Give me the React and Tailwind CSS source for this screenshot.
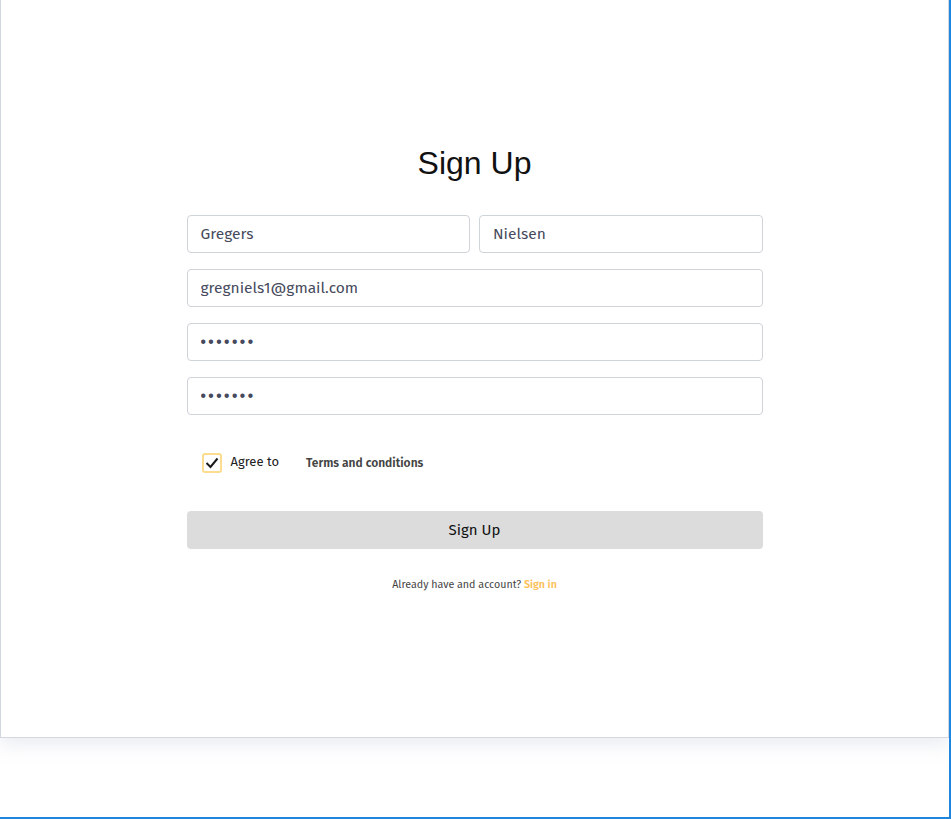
const font = { fontFamily: '"Fira Sans", "Noto Sans", "Open Sans", sans-serif' };

function Field({ value, className = "" }) {
    return (
        <input
            readOnly
            value={value}
            className={`h-[38px] w-full rounded border border-[#cfd3da] bg-white px-[13px] text-[15.5px] text-[#464a5c] outline-none ${className}`}
            style={font}
        />
    );
}

export default function App() {
    return (
        <div className="w-[951px] h-[819px] bg-white border-r-2 border-b-2 border-[#1f86e0] overflow-hidden">
            <div className="w-[949px] h-[738px] bg-white border-l border-r border-b border-[#d3d8e0] shadow-[0_8px_16px_rgba(200,205,220,0.35)] flex flex-col items-center pt-[145px]">
                <h1 className="text-[32px] leading-[37px] text-[#111] font-['Liberation_Sans',Arial,sans-serif]">
                    Sign Up
                </h1>

                <div className="w-[576px] mt-[33px] flex flex-col gap-4">
                    <div className="flex gap-[9px]">
                        <Field value="Gregers" />
                        <Field value="Nielsen" />
                    </div>
                    <Field value="gregniels1@gmail.com" />
                    <Field value="•••••••" className="tracking-[2.5px] font-bold" />
                    <Field value="•••••••" className="tracking-[2.5px] font-bold" />
                </div>

                <div className="w-[576px] mt-[38px] flex items-center pl-[15px]" style={font}>
                    <span className="w-[20px] h-[20px] rounded-[3px] border-2 border-[#fcdc8e] flex items-center justify-center">
                        <svg width="14" height="12" viewBox="0 0 14 12" fill="none">
                            <path d="M1.5 6 L5.5 10 L12.5 1.5" stroke="#1a1a1a" strokeWidth="2" />
                        </svg>
                    </span>
                    <span className="ml-[9px] text-[13px] text-[#222] -mt-[3px]">Agree to</span>
                    <span className="ml-[27px] text-[12px] font-semibold text-[#444]">Terms and conditions</span>
                </div>

                <button
                    className="w-[576px] h-[38px] mt-[38px] rounded bg-[#dcdcdc] text-[15px] text-[#111]"
                    style={font}
                >
                    Sign Up
                </button>

                <p className="mt-[28px] text-[10.7px] text-[#444]" style={font}>
                    Already have and account?{" "}
                    <span className="font-semibold text-[#fcc15a]">Sign in</span>
                </p>
            </div>
        </div>
    );
}
